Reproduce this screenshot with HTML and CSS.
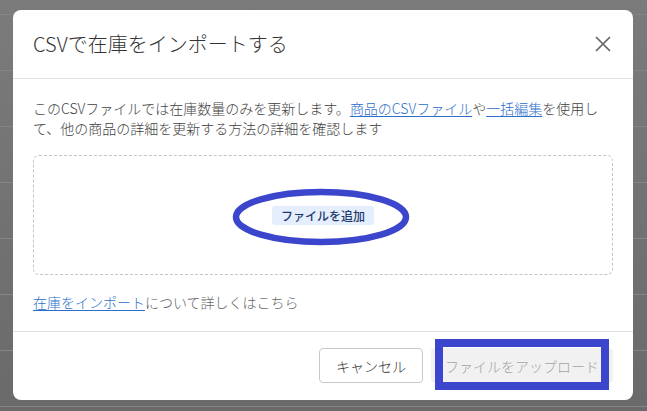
FILE: index.html
```html
<!DOCTYPE html>
<html lang="ja">
<head>
    <meta charset="UTF-8">
    <meta name="viewport" content="width=device-width, initial-scale=1.0">
    <title>CSVで在庫をインポートする</title>
    <link rel="stylesheet" href="styles.css">
</head>
<body>
    <div class="backdrop">
        <div class="modal">
            <!-- Header -->
            <div class="modal-header">
                <h2 class="modal-title">CSVで在庫をインポートする</h2>
                <button class="close-btn" aria-label="閉じる">
                    <svg width="16" height="16" viewBox="0 0 16 16">
                        <path d="M1 1 L15 15 M15 1 L1 15" stroke="#666" stroke-width="1.7" fill="none"/>
                    </svg>
                </button>
            </div>

            <!-- Body -->
            <div class="modal-body">
                <p class="intro">このCSVファイルでは在庫数量のみを更新します。<a href="#">商品のCSVファイル</a>や<a href="#">一括編集</a>を使用して、他の商品の詳細を更新する方法の詳細を確認します</p>

                <div class="dropzone">
                    <span class="add-file">ファイルを追加</span>
                    <svg class="mark-ellipse" width="580" height="120" viewBox="0 0 580 120">
                        <ellipse cx="288" cy="62" rx="85" ry="25" stroke="#3c46cc" stroke-width="6.5" fill="none"/>
                    </svg>
                </div>

                <p class="help"><a href="#">在庫をインポート</a>について詳しくはこちら</p>
            </div>

            <!-- Footer -->
            <div class="modal-footer">
                <button class="btn">キャンセル</button>
                <div class="upload-wrap">
                    <button class="btn btn-disabled" disabled>ファイルをアップロード</button>
                    <span class="mark-rect"></span>
                </div>
            </div>
        </div>
    </div>
</body>
</html>
```

FILE: styles.css
```css
body {
    margin: 0;
    font-family: "Noto Sans CJK JP", "Noto Sans", sans-serif;
    font-weight: 300;
    color: #333;
    background-color: #737373;
    background-image:
        repeating-linear-gradient(to bottom, transparent 0, transparent 14px, #858585 14px, #858585 15px, transparent 15px, transparent 56px),
        linear-gradient(to bottom, #7b7b7b, #6a6a6a);
    height: 411px;
    overflow: hidden;
}

.backdrop {
    padding: 10px 14px 11px 13px;
}

.modal {
    background: #fff;
    border-radius: 8px;
    height: 390px;
    display: flex;
    flex-direction: column;
}

.modal-header {
    height: 68px;
    display: flex;
    align-items: center;
    justify-content: space-between;
    padding: 0 22px 0 20px;
    border-bottom: 1px solid #e1e1e1;
}

.modal-title {
    margin: 0;
    font-size: 20px;
    font-weight: 300;
    color: #333;
    line-height: 24px;
}

.close-btn {
    border: none;
    background: none;
    padding: 0;
    width: 16px;
    height: 16px;
    display: flex;
    cursor: pointer;
}

.modal-body {
    padding: 19px 20px 19px 20px;
    border-bottom: 1px solid #e1e1e1;
}

.intro {
    margin: 0;
    font-size: 14px;
    line-height: 20px;
    color: #3f3f3f;
}

a {
    color: #2c6ecb;
    text-decoration: underline;
    text-underline-offset: 2px;
}

.dropzone {
    position: relative;
    margin-top: 17px;
    height: 118px;
    border: 1px dashed #c4c4c4;
    border-radius: 6px;
    display: flex;
    align-items: center;
    justify-content: center;
}

.add-file {
    background: #e4eefc;
    color: #1f3a6b;
    font-size: 12px;
    font-weight: 500;
    line-height: 15px;
    padding: 2px 9px;
    border-radius: 3px;
}

.mark-ellipse {
    position: absolute;
    left: -1px;
    top: -1px;
    pointer-events: none;
}

.help {
    margin: 17px 0 0;
    font-size: 14px;
    line-height: 20px;
    color: #666;
}

.modal-footer {
    display: flex;
    justify-content: flex-end;
    gap: 8px;
    padding: 16px 20px 17px;
}

.btn {
    font-family: inherit;
    font-size: 14px;
    font-weight: 300;
    line-height: 20px;
    height: 35px;
    padding: 0 16px;
    background: #fff;
    color: #333;
    border: 1px solid #c9c9c9;
    border-radius: 4px;
    cursor: pointer;
}

.btn-disabled {
    background: #f1f1f1;
    color: #a3a3a3;
    border-color: #f1f1f1;
    padding: 0 13px;
    cursor: default;
}

.upload-wrap {
    position: relative;
    display: flex;
}

.mark-rect {
    position: absolute;
    left: 4px;
    right: 4px;
    top: -9px;
    bottom: -7px;
    border: 8px solid #3c46cc;
    pointer-events: none;
}
```
